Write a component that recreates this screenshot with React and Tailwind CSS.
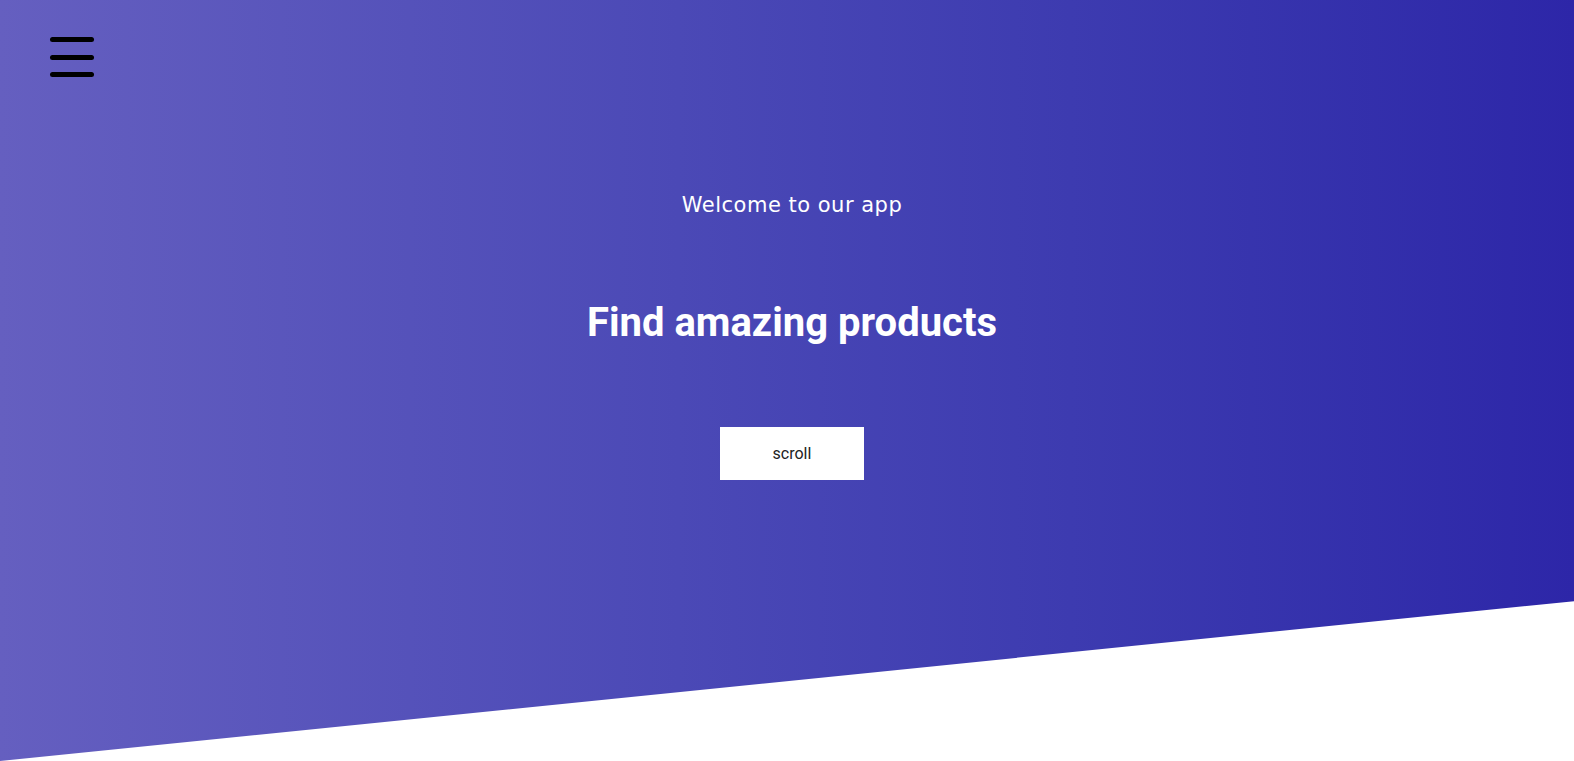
import { Menu } from 'lucide-react';

const App = () => {
  return (
    <div className="min-h-screen bg-white">
      <header className="h-[761px] flex flex-col bg-gradient-to-r from-[#655fc0] to-[#2d26a8] [clip-path:polygon(0_0,100%_0,100%_79%,0_100%)]">
        {/* menu */}
        <button className="mt-[37px] ml-[50px] w-[44px] flex flex-col gap-[12.5px]" aria-label="menu">
          <span className="block h-[5px] w-full rounded-full bg-black" />
          <span className="block h-[5px] w-full rounded-full bg-black" />
          <span className="block h-[5px] w-full rounded-full bg-black" />
        </button>
        <div className="flex flex-col items-center pl-[10px] text-white">
          <p className="mt-[114px] text-[21px] leading-[28px] tracking-[0.5px] font-['DejaVu_Sans',sans-serif]">
            Welcome to our app
          </p>
          <h1 className="mt-[81px] text-[40px] leading-[46px] font-bold font-['Roboto',sans-serif]">
            Find amazing products
          </h1>
          <button className="mt-[81px] w-[144px] h-[53px] bg-white text-[#222] text-[16px] font-['Roboto',sans-serif]">
            scroll
          </button>
        </div>
      </header>
    </div>
  );
};

export default App;
